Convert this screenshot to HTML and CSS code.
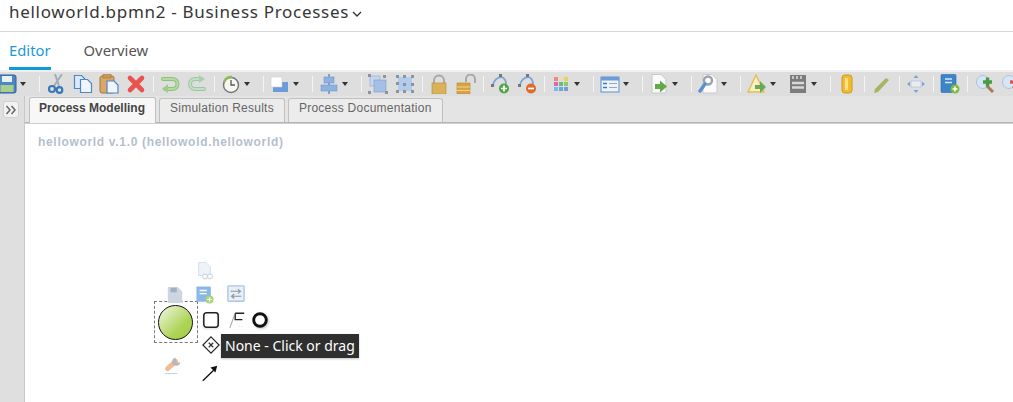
FILE: index.html
```html
<!DOCTYPE html>
<html>

<head>
    <title>helloworld.bpmn2 - Business Processes</title>
    <link rel="stylesheet" href="styles.css">
</head>

<body>
    <header class="title-bar">
        <h1>helloworld.bpmn2 - Business Processes</h1>
        <svg class="chevron" width="10" height="6" viewBox="0 0 10 6"><path d="M1 1l4 4 4-4" fill="none" stroke="#333" stroke-width="1.3"/></svg>
    </header>
    <nav class="nav-tabs">
        <a class="nav-tab active">Editor</a>
        <a class="nav-tab">Overview</a>
    </nav>

    <div class="toolbar">
        <span class="btn split first"><svg viewBox="0 0 20 20"><rect x="1" y="1" width="18" height="18" rx="2" fill="#4f86c6" stroke="#2c5f9e"/><rect x="5" y="2" width="10" height="6" fill="#e8f0fa"/><rect x="3.500" y="11" width="13" height="7" fill="#a8cf8e"/></svg><i></i></span>
        <span class="sep"></span>
        <span class="btn"><svg viewBox="0 0 20 20"><path d="M16 0L8 12M9 0l4 12" stroke="#a3adb8" stroke-width="2" fill="none"/><circle cx="6" cy="15" r="3" fill="none" stroke="#3a78bd" stroke-width="2.200"/><circle cx="13.500" cy="16" r="2.800" fill="none" stroke="#3a78bd" stroke-width="2.200"/></svg></span>
        <span class="btn"><svg viewBox="0 0 20 20"><path d="M1.500 1.500h7l3 3v10h-10z" fill="#dce9f8" stroke="#4f86c6" stroke-width="1.200"/><path d="M7.500 5.500h7l4 4v9h-11z" fill="#eef5fd" stroke="#4f86c6" stroke-width="1.200"/></svg></span>
        <span class="btn"><svg viewBox="0 0 20 20"><rect x="1" y="2" width="14" height="17" rx="2" fill="#d9a868" stroke="#a5743a"/><rect x="4" y="0.500" width="8" height="3.500" fill="#c79b55" stroke="#a5743a" stroke-width=".6"/><path d="M8 7h7l4 4v8H8z" fill="#eef5fd" stroke="#4f86c6" stroke-width="1.200"/></svg></span>
        <span class="btn"><svg viewBox="0 0 20 20"><path d="M4 4l12 12M16 4L4 16" stroke="#e8534f" stroke-width="4.600" stroke-linecap="round"/></svg></span>
        <span class="sep"></span>
        <span class="btn"><svg viewBox="0 0 20 20"><g fill="none" stroke-linecap="round"><path d="M3 5h9.500a5 5 0 0 1 0 10H5" stroke="#8cc37a" stroke-width="4"/><path d="M3 5h9.500a5 5 0 0 1 0 10H5" stroke="#b4dca2" stroke-width="2"/></g><path d="M8 10v9L2 15z" fill="#9ccd8a"/></svg></span>
        <span class="btn"><svg viewBox="0 0 20 20"><g fill="none" stroke-linecap="round"><path d="M13 5H8a5 5 0 0 0 0 10h9" stroke="#9cc7a0" stroke-width="4"/><path d="M13 5H8a5 5 0 0 0 0 10h9" stroke="#c4e0c4" stroke-width="2"/></g><path d="M12 1v8l6-4z" fill="#a9d0ac"/></svg></span>
        <span class="sep"></span>
        <span class="btn split"><svg viewBox="0 0 20 20"><circle cx="10" cy="11" r="7.500" fill="#f6f6f2" stroke="#777" stroke-width="1.500"/><path d="M3 8a8 8 0 0 1 8-5" fill="none" stroke="#8dbb55" stroke-width="2.400"/><path d="M10 6v5h4" fill="none" stroke="#555" stroke-width="1.300"/></svg><i></i></span>
        <span class="sep"></span>
        <span class="btn split"><svg viewBox="0 0 20 20"><rect x="3" y="8" width="15" height="10" fill="#6b9bd8"/><rect x="1" y="3" width="11" height="10" fill="#fff" stroke="#ccc" stroke-width=".6"/></svg><i></i></span>
        <span class="sep"></span>
        <span class="btn split"><svg viewBox="0 0 20 20"><rect x="9" y="0" width="2" height="20" fill="#7ea3d2"/><rect x="5" y="3" width="10" height="6" fill="#8db2e2" stroke="#7297c8" stroke-width=".6"/><rect x="2" y="11" width="16" height="6" fill="#8db2e2" stroke="#7297c8" stroke-width=".6"/></svg><i></i></span>
        <span class="sep"></span>
        <span class="btn"><svg viewBox="0 0 20 20"><rect x="2" y="2" width="10" height="10" fill="#c4d7ef" stroke="#8aa8cf" stroke-width=".6"/><rect x="6" y="6" width="12" height="12" fill="#a4c0e7" stroke="#7c9cc8" stroke-width=".6"/><path d="M0 0h3v3H0zM15 1h3v3h-3zM0 17h3v3H0zM17 17h3v3h-3z" fill="#8d9399"/></svg></span>
        <span class="btn"><svg viewBox="0 0 20 20"><rect x="3" y="3" width="14" height="14" fill="#b3cbec"/><path d="M1 1h3v3H1zM8 1h3v3H8zM16 1h3v3h-3zM1 8h3v3H1zM16 9h3v3h-3zM8 9h3v3H8zM1 16h3v3H1zM8 16h3v3H8zM16 16h3v3h-3z" fill="#8b949d"/></svg></span>
        <span class="sep"></span>
        <span class="btn"><svg viewBox="0 0 20 20"><path d="M5 10V6.500a5 5 0 0 1 10 0V10" fill="none" stroke="#a5a5a5" stroke-width="1.800"/><rect x="3" y="9" width="14" height="11" fill="#dcb259" stroke="#b08a35" stroke-width=".6"/></svg></span>
        <span class="btn"><svg viewBox="0 0 20 20"><path d="M10 8V5a4.500 4.500 0 0 1 9 0v4" fill="none" stroke="#a5a5a5" stroke-width="1.800"/><rect x="1" y="9" width="13" height="11" fill="#d9a343" stroke="#b08a35" stroke-width=".6"/><path d="M1 13h13M1 16.500h13" stroke="#f0d48c"/></svg></span>
        <span class="sep"></span>
        <span class="btn"><svg viewBox="0 0 20 20"><path d="M3 12a9 9 0 0 1 9-9" fill="none" stroke="#7ba5da" stroke-width="1.800"/><path d="M12 3a8 8 0 0 1 4 7" fill="none" stroke="#7ba5da" stroke-width="1.800"/><rect x="1" y="10" width="3" height="3" fill="#777"/><rect x="9" y="0" width="3" height="3" fill="#777"/><circle cx="14" cy="14.500" r="5" fill="#4fa546"/><path d="M11 14.500h6M14 11.500v6" stroke="#fff" stroke-width="1.700"/></svg></span>
        <span class="btn"><svg viewBox="0 0 20 20"><path d="M3 12a9 9 0 0 1 9-9" fill="none" stroke="#7ba5da" stroke-width="1.800"/><path d="M12 3a8 8 0 0 1 4 7" fill="none" stroke="#7ba5da" stroke-width="1.800"/><rect x="1" y="10" width="3" height="3" fill="#777"/><rect x="9" y="0" width="3" height="3" fill="#777"/><circle cx="14" cy="14.500" r="5" fill="#e0692c"/><path d="M11 14.500h6" stroke="#fff" stroke-width="1.700"/></svg></span>
        <span class="sep"></span>
        <span class="btn split"><svg viewBox="0 0 20 20"><path d="M3 3h4v4H3z" fill="#e88"/><path d="M8 3h4v4H8z" fill="#eda"/><path d="M13 3h4v4h-4z" fill="#ec6"/><path d="M3 8h4v4H3z" fill="#d6a"/><path d="M8 8h4v4H8z" fill="#6b8"/><path d="M13 8h4v4h-4z" fill="#8c6"/><path d="M3 13h4v4H3z" fill="#7be"/><path d="M8 13h4v4H8z" fill="#6ad"/><path d="M13 13h4v4h-4z" fill="#79d"/></svg><i></i></span>
        <span class="sep"></span>
        <span class="btn split"><svg viewBox="0 0 20 20"><rect x="1" y="3" width="18" height="15" fill="#eef3fa" stroke="#5b8fd0"/><rect x="1" y="3" width="18" height="3.500" fill="#6c9bd8"/><path d="M3 9.500h4M3 13.500h4" stroke="#3f78c0" stroke-width="1.500"/><path d="M9 9.500h8M9 13.500h8" stroke="#9ab" stroke-width="1"/></svg><i></i></span>
        <span class="sep"></span>
        <span class="btn split"><svg viewBox="0 0 20 20"><path d="M3 0.500h9l5 5V19H3z" fill="#fafafa" stroke="#c8c8c8"/><path d="M6 10h5V6.500l7 6-7 6V15H6z" fill="#62a94a"/></svg><i></i></span>
        <span class="sep"></span>
        <span class="btn split"><svg viewBox="0 0 20 20"><path d="M5 0.500h9l5 5V19H5z" fill="#fafafa" stroke="#c8c8c8"/><circle cx="10" cy="6.500" r="4" fill="none" stroke="#9aa3ad" stroke-width="2.400"/><path d="M7 10l-5 7" stroke="#5b8fd0" stroke-width="3.400" stroke-linecap="round"/></svg><i></i></span>
        <span class="sep"></span>
        <span class="btn split"><svg viewBox="0 0 20 20"><path d="M9 1L1 18h16z" fill="#f8efc0" stroke="#e0bf58" stroke-width="1.400"/><path d="M8 11h5V7l6 6-6 6v-4H8z" fill="#6aa955"/></svg><i></i></span>
        <span class="btn split"><svg viewBox="0 0 20 20"><rect x="2" y="1" width="16" height="18" fill="#7c7c7c"/><path d="M5 2v3M9 2v3M13 2v3" stroke="#ddd" stroke-width="1.500"/><path d="M4 9h12M4 13.500h12" stroke="#d8d8d8" stroke-width="2.400"/></svg><i></i></span>
        <span class="sep"></span>
        <span class="btn"><svg viewBox="0 0 20 20"><rect x="5" y="1" width="10" height="18" rx="3" fill="#f2bd2c" stroke="#cf9420"/><rect x="8" y="4" width="3" height="12" fill="#f9e187"/></svg></span>
        <span class="sep"></span>
        <span class="btn"><svg viewBox="0 0 20 20"><path d="M3 15L14 4l3 2L6 18l-4 1z" fill="#a3b660"/></svg></span>
        <span class="sep"></span>
        <span class="btn"><svg viewBox="0 0 20 20"><rect x="5" y="7" width="10" height="6" fill="#e9edf3" stroke="#a9b7c9" stroke-width=".6"/><path d="M10 1l2.500 3h-5zM10 19l2.500-3h-5zM1 10l3-2.500v5zM19 10l-3-2.500v5z" fill="#7ba5da"/></svg></span>
        <span class="sep"></span>
        <span class="btn"><svg viewBox="0 0 20 20"><rect x="1" y="0.500" width="15" height="18" rx="1" fill="#3d85c8" stroke="#2c6aa8" stroke-width=".6"/><path d="M5 5h7M5 8.500h7" stroke="#d6e8f8" stroke-width="1.500"/><circle cx="15" cy="15" r="4.500" fill="#7ebc3e"/><path d="M12.500 15h5M15 12.500v5" stroke="#fff" stroke-width="1.500"/></svg></span>
        <span class="sep"></span>
        <span class="btn"><svg viewBox="0 0 20 20"><circle cx="8" cy="8" r="6.500" fill="#d6e6f6" stroke="#a9c3de"/><path d="M12 12l6 6" stroke="#a97c50" stroke-width="3"/><path d="M8 8h9M12.500 3.500v9" stroke="#4d9a44" stroke-width="3.400"/></svg></span>
        <span class="btn"><svg viewBox="0 0 20 20"><circle cx="8" cy="8" r="6.500" fill="#d6e6f6" stroke="#a9c3de"/><path d="M12 12l6 6" stroke="#a97c50" stroke-width="3"/><path d="M9 8h9" stroke="#e0534f" stroke-width="3.400"/></svg></span>
    </div>

    <main class="workspace">
        <aside class="side-panel">
            <span class="expand">
                <svg width="12" height="10" viewBox="0 0 12 10"><path d="M1.500 1l3.500 4-3.500 4M6.500 1l3.500 4-3.500 4" fill="none" stroke="#666" stroke-width="1.500"/></svg>
            </span>
        </aside>
        <section class="editor">
            <div class="tab-strip">
                <span class="tab current">Process Modelling</span>
                <span class="tab">Simulation Results</span>
                <span class="tab">Process Documentation</span>
            </div>
            <div class="canvas">
                <p class="canvas-title">helloworld v.1.0 (hellowold.helloworld)</p>

                <div class="selection"></div>
                <div class="start-event"></div>

                <svg class="shape doc-view" viewBox="0 0 20 20"><path d="M3 0.500h8l5 5V15H3z" fill="#eef3fa" stroke="#cfdcec"/><circle cx="10" cy="16" r="2.800" fill="#fff" stroke="#bcc8d6"/><circle cx="15.500" cy="16" r="2.800" fill="#fff" stroke="#bcc8d6"/></svg>
                <svg class="shape doc-file" viewBox="0 0 20 20"><path d="M2 1h11l5 5v13H2z" fill="#ccd5e0"/><rect x="5" y="2" width="7" height="5" fill="#9fb0c4"/></svg>
                <svg class="shape add-doc" viewBox="0 0 20 20"><rect x="0.500" y="0.500" width="16" height="17" rx="1" fill="#8ab8e6"/><path d="M4 5h8M4 8.500h8" stroke="#fff" stroke-width="1.500"/><circle cx="15" cy="15" r="4.500" fill="#a8d479"/><path d="M12.500 15h5M15 12.500v5" stroke="#fff" stroke-width="1.300"/></svg>
                <svg class="shape swap" viewBox="0 0 20 20"><rect x="1" y="1" width="18" height="17" rx="1" fill="#e8eff8" stroke="#a9c6e6" stroke-width="1.500"/><path d="M4 7h11M12 4.500l3 2.500-3 2.500M16 12.500H5M8 10l-3 2.500L8 15" fill="none" stroke="#8d959e" stroke-width="1.200"/></svg>

                <svg class="shape task" viewBox="0 0 20 20"><rect x="2" y="2" width="16" height="16" rx="3" fill="#fff" stroke="#222" stroke-width="1.700"/></svg>
                <svg class="shape flag" viewBox="0 0 20 20"><path d="M2 19L7 5" fill="none" stroke="#aaa" stroke-width="1.200"/><path d="M8 2.500h10M8 2.500v7h8" fill="none" stroke="#222" stroke-width="1.500"/><path d="M12 17h5" stroke="#ccc" stroke-dasharray="1 2"/></svg>
                <svg class="shape ring" viewBox="0 0 20 20"><circle cx="10" cy="10" r="7" fill="#fff" stroke="#111" stroke-width="3.200"/></svg>
                <svg class="shape gateway" viewBox="0 0 20 20"><path d="M10 1l9 9-9 9-9-9z" fill="#fff" stroke="#222" stroke-width="1.300"/><path d="M7.500 7.500l5 5M12.500 7.500l-5 5" stroke="#333" stroke-width="1.400"/></svg>
                <svg class="shape wrench" viewBox="0 0 20 20"><path d="M4 14L13 6" stroke="#f4b995" stroke-width="5.500" stroke-linecap="round"/><path d="M13 2a4.500 4.500 0 1 0 5 5l-3 .5-1.500-2z" fill="#b8b8b8"/><path d="M1 19.500h14" stroke="#bcd3ea" stroke-width="1.200"/></svg>
                <svg class="shape arrow" viewBox="0 0 20 20"><path d="M2 18.500L14 7" stroke="#111" stroke-width="1.500"/><path d="M18 2l-2 7.500-5.500-5.500z" fill="#111"/></svg>

                <div class="tooltip">None - Click or drag</div>
            </div>
        </section>
    </main>
</body>

</html>
```

FILE: styles.css
```css
* {
    margin: 0;
    box-sizing: border-box;
}

html,
body {
    height: 100%;
    overflow: hidden;
}

body {
    background-color: white;
    font-family: "Noto Sans", sans-serif;
    color: #333;
    display: flex;
    flex-direction: column;
}

.title-bar {
    height: 32px;
    display: flex;
    align-items: center;
    gap: 3px;
    padding: 0 0 8px 9px;
    border-bottom: 1px solid #d8d8d8;
}

.title-bar h1 {
    font-size: 17px;
    font-weight: 400;
    letter-spacing: 0.7px;
    color: #363636;
}

.chevron {
    margin-top: 4px;
}

.nav-tabs {
    height: 38px;
    display: flex;
    gap: 33px;
    padding-left: 9px;
}

.nav-tab {
    font-size: 14.8px;
    line-height: 37px;
    color: #555;
}

.nav-tab.active {
    color: #1b9ad6;
    border-bottom: 3px solid #0d9ad9;
}

.toolbar {
    height: 26px;
    flex: none;
    display: flex;
    align-items: center;
    overflow: hidden;
    background-color: #dedede;
    border-top: 2px solid #efefef;
}

.btn {
    flex: none;
    width: 26.7px;
    height: 24px;
    display: flex;
    align-items: center;
    padding-left: 3px;
}

.btn svg {
    flex: none;
    width: 20px;
    height: 20px;
    filter: blur(0.3px);
}

.btn.split {
    width: 41.4px;
}

.btn.first {
    margin-left: -6px;
}

.btn i {
    margin-left: 3px;
    border-top: 4px solid #333;
    border-left: 3.5px solid transparent;
    border-right: 3.5px solid transparent;
}

.sep {
    flex: none;
    width: 7.6px;
    height: 16px;
    background: linear-gradient(#f4f4f4, #f4f4f4) center / 1px 100% no-repeat;
}

.workspace {
    flex: 1;
    display: flex;
    min-height: 0;
}

.side-panel {
    width: 25px;
    flex: none;
    background-color: #dfdfdf;
    border-right: 1px solid #c8c8c8;
    padding: 5px 3px;
}

.expand {
    width: 16px;
    height: 17px;
    display: flex;
    align-items: center;
    justify-content: center;
    background-color: #f2f2f2;
    border: 1px solid #d0d0d0;
    border-radius: 3px;
}

.editor {
    flex: 1;
    display: flex;
    flex-direction: column;
}

.tab-strip {
    height: 27px;
    flex: none;
    display: flex;
    align-items: flex-end;
    gap: 3px;
    padding-left: 4px;
    background-color: #e4e4e4;
    border-bottom: 1px solid #b5b5b5;
}

.tab {
    height: 24px;
    padding: 0 10px;
    font-family: "Liberation Sans", sans-serif;
    font-size: 12px;
    line-height: 19px;
    letter-spacing: 0.25px;
    color: #666;
    background-color: #ececec;
    border: 1px solid #c0c0c0;
    border-bottom: none;
    border-radius: 3px 3px 0 0;
}

.tab.current {
    font-weight: bold;
    letter-spacing: 0;
    color: #444;
    background-color: #f7f7f7;
    margin-bottom: -1px;
    height: 26px;
    line-height: 20px;
    padding: 0 10px 0 9px;
}

.canvas {
    flex: 1;
    position: relative;
    overflow: hidden;
    background-color: white;
    border-top: 1px solid #cfcfcf;
}

.canvas-title {
    font-family: "Liberation Sans", sans-serif;
    font-size: 12px;
    font-weight: bold;
    letter-spacing: 0.68px;
    color: #b4bfcc;
    padding: 11px 0 0 13px;
}

/* diagram items sit on the free canvas, origin is the canvas corner at 25,125 */
.selection {
    position: absolute;
    left: 129px;
    top: 177px;
    width: 44px;
    height: 42px;
    border: 1px dashed #777;
}

.start-event {
    position: absolute;
    left: 133px;
    top: 181px;
    width: 35px;
    height: 35px;
    border-radius: 50%;
    border: 1.5px solid #111;
    background: linear-gradient(135deg, #f2f7ea, #aed455 65%, #a3cc45);
}

.shape {
    position: absolute;
    width: 18px;
    height: 18px;
    filter: blur(0.25px);
}

.doc-view { left: 171px; top: 138px; }
.doc-file { left: 141px; top: 162px; }
.add-doc { left: 171px; top: 162px; }
.swap { left: 202px; top: 161px; }
.task { left: 177px; top: 187px; filter: drop-shadow(0 1px 1px rgba(0, 0, 0, 0.15)); }
.flag { left: 203px; top: 187px; }
.ring { left: 226px; top: 187px; filter: drop-shadow(1px 1px 1px rgba(0, 0, 0, 0.25)); }
.gateway { left: 177px; top: 212px; }
.wrench { left: 139px; top: 232px; }
.arrow { left: 176px; top: 240px; }

.tooltip {
    position: absolute;
    left: 196px;
    top: 210px;
    height: 24px;
    padding: 0 4px;
    font-size: 14px;
    line-height: 24px;
    color: white;
    background-color: #2f2f2f;
    box-shadow: 0 1px 2px rgba(0, 0, 0, 0.25);
    white-space: nowrap;
}
```
